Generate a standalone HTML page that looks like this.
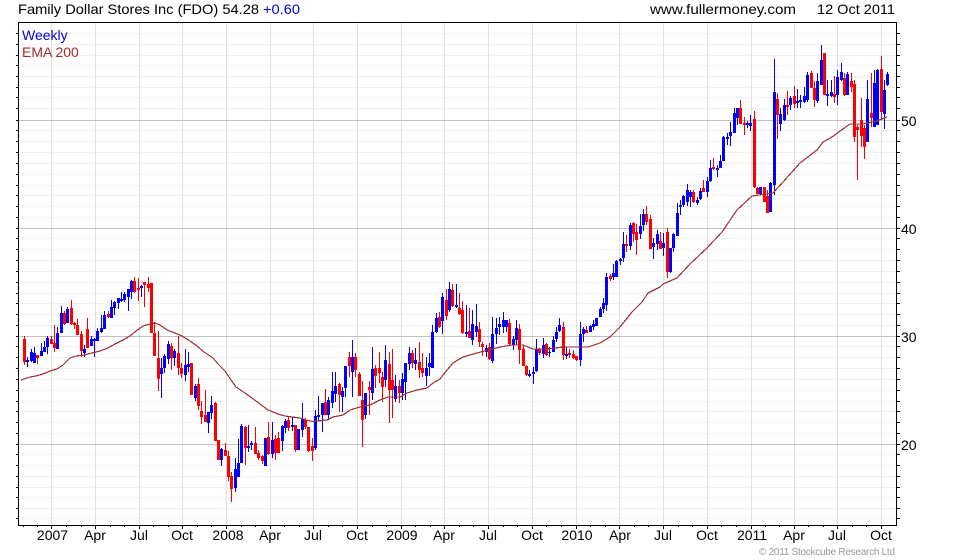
<!DOCTYPE html>
<html><head><meta charset="utf-8"><title>FDO</title>
<style>
html,body{margin:0;padding:0;background:#fff}
body{width:980px;height:560px;overflow:hidden;position:relative}
svg{position:absolute;left:0;top:0}
text{font-family:"Liberation Sans",sans-serif;font-size:14px;fill:#000}
</style></head><body>
<svg width="980" height="560" viewBox="0 0 980 560" xmlns="http://www.w3.org/2000/svg">
<g shape-rendering="crispEdges" fill="none">
<path stroke="#f0f0f0" d="M19 33.5H896M19 44.5H896M19 55.5H896M19 65.5H896M19 76.5H896M19 87.5H896M19 97.5H896M19 108.5H896M19 130.5H896M19 141.5H896M19 152.5H896M19 163.5H896M19 174.5H896M19 185.5H896M19 195.5H896M19 206.5H896M19 217.5H896M19 238.5H896M19 249.5H896M19 260.5H896M19 271.5H896M19 282.5H896M19 293.5H896M19 303.5H896M19 314.5H896M19 325.5H896M19 346.5H896M19 357.5H896M19 368.5H896M19 379.5H896M19 390.5H896M19 401.5H896M19 411.5H896M19 422.5H896M19 433.5H896M19 454.5H896M19 465.5H896M19 476.5H896M19 487.5H896M19 497.5H896M19 508.5H896M19 518.5H896"/>
<path stroke="#e0e0e0" d="M51.5 23V525M95.5 23V525M139.5 23V525M182.5 23V525M226.5 23V525M270.5 23V525M313.5 23V525M357.5 23V525M401.5 23V525M444.5 23V525M488.5 23V525M532.5 23V525M576.5 23V525M619.5 23V525M663.5 23V525M707.5 23V525M751.5 23V525M794.5 23V525M837.5 23V525M881.5 23V525"/>
<path stroke="#c0c0c0" d="M19 120.5H896M19 228.5H896M19 336.5H896M19 444.5H896"/>
<path stroke="#000" d="M18.5 22V526M896.5 22V526M18 22.5H897M18 525.5H897"/>
<path stroke="#000" d="M16 33.5H18M16 44.5H18M16 55.5H18M16 65.5H18M16 76.5H18M16 87.5H18M16 97.5H18M16 108.5H18M16 120.5H18M16 130.5H18M16 141.5H18M16 152.5H18M16 163.5H18M16 174.5H18M16 185.5H18M16 195.5H18M16 206.5H18M16 217.5H18M16 228.5H18M16 238.5H18M16 249.5H18M16 260.5H18M16 271.5H18M16 282.5H18M16 293.5H18M16 303.5H18M16 314.5H18M16 325.5H18M16 336.5H18M16 346.5H18M16 357.5H18M16 368.5H18M16 379.5H18M16 390.5H18M16 401.5H18M16 411.5H18M16 422.5H18M16 433.5H18M16 444.5H18M16 454.5H18M16 465.5H18M16 476.5H18M16 487.5H18M16 497.5H18M16 508.5H18M16 518.5H18"/>
<path stroke="#000" d="M897 33.5H900M897 44.5H900M897 55.5H900M897 65.5H900M897 76.5H900M897 87.5H900M897 97.5H900M897 108.5H900M897 120.5H900M897 130.5H900M897 141.5H900M897 152.5H900M897 163.5H900M897 174.5H900M897 185.5H900M897 195.5H900M897 206.5H900M897 217.5H900M897 228.5H900M897 238.5H900M897 249.5H900M897 260.5H900M897 271.5H900M897 282.5H900M897 293.5H900M897 303.5H900M897 314.5H900M897 325.5H900M897 336.5H900M897 346.5H900M897 357.5H900M897 368.5H900M897 379.5H900M897 390.5H900M897 401.5H900M897 411.5H900M897 422.5H900M897 433.5H900M897 444.5H900M897 454.5H900M897 465.5H900M897 476.5H900M897 487.5H900M897 497.5H900M897 508.5H900M897 518.5H900"/>
<path stroke="#000" d="M51.5 526V529M95.5 526V529M139.5 526V529M182.5 526V529M226.5 526V529M270.5 526V529M313.5 526V529M357.5 526V529M401.5 526V529M444.5 526V529M488.5 526V529M532.5 526V529M576.5 526V529M619.5 526V529M663.5 526V529M707.5 526V529M751.5 526V529M794.5 526V529M837.5 526V529M881.5 526V529M23.5 526V527M37.5 526V527M66.5 526V527M81.5 526V527M110.5 526V527M124.5 526V527M153.5 526V527M168.5 526V527M197.5 526V527M211.5 526V527M241.5 526V527M255.5 526V527M284.5 526V527M299.5 526V527M328.5 526V527M342.5 526V527M372.5 526V527M386.5 526V527M415.5 526V527M430.5 526V527M459.5 526V527M473.5 526V527M503.5 526V527M517.5 526V527M546.5 526V527M561.5 526V527M590.5 526V527M605.5 526V527M634.5 526V527M648.5 526V527M678.5 526V527M692.5 526V527M721.5 526V527M736.5 526V527M765.5 526V527M779.5 526V527M808.5 526V527M823.5 526V527M852.5 526V527M866.5 526V527"/>
</g>
<g shape-rendering="crispEdges" fill="none">
<path stroke="#0000ff" d="M27.5 357V367M31.5 349V362M34.5 347V363M41.5 343V356M44.5 341V352M47.5 336V354M57.5 327V349M61.5 306V333M67.5 307V323M84.5 345V357M91.5 336V346M94.5 338V357M97.5 328V341M101.5 315V333M104.5 311V329M111.5 300V318M114.5 301V315M118.5 298V309M121.5 292V302M124.5 292V302M128.5 289V311M131.5 280V299M141.5 285V297M161.5 358V398M164.5 354V373M168.5 341V364M174.5 349V366M185.5 349V381M188.5 352V372M195.5 384V401M208.5 412V433M211.5 396V419M221.5 448V466M235.5 458V492M238.5 439V477M241.5 424V463M248.5 425V452M251.5 441V450M265.5 438V466M272.5 422V458M282.5 425V451M285.5 419V433M292.5 417V431M298.5 429V450M302.5 403V437M315.5 410V450M318.5 396V421M322.5 403V432M328.5 397V420M332.5 372V408M335.5 372V402M342.5 387V412M345.5 366V397M352.5 340V397M365.5 393V419M372.5 347V400M385.5 345V387M395.5 375V402M402.5 373V400M405.5 363V400M409.5 347V370M415.5 348V370M426.5 357V386M429.5 353V376M432.5 325V368M436.5 313V333M442.5 293V334M449.5 282V312M456.5 284V308M466.5 305V337M472.5 310V345M476.5 304V337M486.5 345V357M492.5 317V363M496.5 318V344M499.5 317V335M503.5 312V333M506.5 320V332M513.5 336V350M516.5 320V345M529.5 370V377M533.5 367V384M536.5 339V372M543.5 338V358M549.5 347V357M553.5 336V352M556.5 327V342M559.5 318V332M566.5 347V359M580.5 322V366M583.5 327V342M590.5 325V332M593.5 320V330M596.5 318V326M600.5 307V317M603.5 298V313M606.5 273V311M613.5 264V280M616.5 260V277M620.5 258V265M623.5 232V262M630.5 223V250M640.5 214V239M643.5 209V231M653.5 238V259M657.5 230V250M663.5 233V256M670.5 248V273M673.5 233V252M677.5 203V236M680.5 200V215M683.5 195V207M687.5 184V206M690.5 190V207M697.5 197V205M700.5 188V200M707.5 177V197M710.5 160V182M717.5 165V177M720.5 155V168M723.5 136V161M727.5 133V145M730.5 122V146M734.5 108V133M737.5 108V125M747.5 121V128M750.5 115V131M760.5 187V194M770.5 182V212M774.5 59V195M780.5 108V131M784.5 99V121M790.5 96V110M797.5 89V108M800.5 95V108M804.5 87V103M807.5 72V102M817.5 73V103M821.5 45V85M827.5 80V106M831.5 80V97M837.5 70V105M841.5 63V81M847.5 72V95M867.5 80V142M874.5 70V127M877.5 69V125M884.5 80V129M887.5 72V86"/>
<path stroke="#0000ff" stroke-width="3" d="M27.5 360V362M31.5 352V361M34.5 353V363M41.5 351V356M44.5 347V352M47.5 338V347M57.5 333V349M61.5 313V333M67.5 309V323M84.5 349V353M91.5 339V346M94.5 339V341M97.5 331V341M101.5 328V332M104.5 315V329M111.5 307V318M114.5 302V308M118.5 298V303M121.5 299V301M124.5 294V300M128.5 289V297M131.5 281V292M141.5 286V288M161.5 368V374M164.5 356V368M168.5 344V359M174.5 351V358M185.5 365V375M188.5 364V367M195.5 386V398M208.5 412V423M211.5 405V413M221.5 449V460M235.5 469V488M238.5 463V477M241.5 426V463M248.5 446V448M251.5 443V445M265.5 438V466M272.5 440V454M282.5 426V441M285.5 421V428M292.5 425V427M298.5 429V450M302.5 419V430M315.5 416V448M318.5 415V417M322.5 403V415M328.5 400V415M332.5 391V403M335.5 386V394M342.5 391V397M345.5 366V388M352.5 357V372M365.5 393V415M372.5 369V393M385.5 360V380M395.5 386V399M402.5 379V393M405.5 363V382M409.5 353V364M415.5 360V364M426.5 368V376M429.5 363V367M432.5 332V368M436.5 318V332M442.5 297V321M449.5 289V310M456.5 305V307M466.5 332V334M472.5 324V340M476.5 326V332M486.5 348V352M492.5 334V361M496.5 328V334M499.5 324V327M503.5 320V327M506.5 320V327M513.5 339V345M516.5 328V340M529.5 374V376M533.5 372V374M536.5 349V371M543.5 345V354M549.5 352V353M553.5 340V352M556.5 332V339M559.5 325V331M566.5 354V356M580.5 334V360M583.5 329V334M590.5 326V332M593.5 324V327M596.5 318V326M600.5 309V317M603.5 303V309M606.5 277V305M613.5 273V277M616.5 261V277M620.5 259V261M623.5 244V258M630.5 225V246M640.5 226V234M643.5 214V225M653.5 243V247M657.5 234V244M663.5 243V248M670.5 248V272M673.5 234V248M677.5 213V236M680.5 205V207M683.5 196V205M687.5 190V202M690.5 192V197M697.5 200V203M700.5 191V199M707.5 181V192M710.5 168V181M717.5 168V170M720.5 161V168M723.5 137V161M727.5 137V139M730.5 132V136M734.5 113V133M737.5 108V118M747.5 123V125M750.5 123V126M760.5 187V194M770.5 183V212M774.5 92V185M780.5 114V124M784.5 105V120M790.5 98V105M797.5 101V103M800.5 100V102M804.5 96V102M807.5 75V100M817.5 81V101M821.5 60V85M827.5 94V96M831.5 92V96M837.5 77V95M841.5 72V80M847.5 74V95M867.5 99V142M874.5 83V127M877.5 70V125M884.5 90V114M887.5 74V85"/>
<path stroke="#ff0000" d="M24.5 336V365M37.5 355V364M51.5 336V344M54.5 325V352M64.5 311V325M71.5 300V325M74.5 322V329M77.5 319V335M81.5 331V357M87.5 318V348M108.5 311V318M134.5 277V293M138.5 278V301M144.5 282V307M148.5 277V292M151.5 283V333M154.5 322V356M158.5 331V391M171.5 343V370M178.5 336V375M181.5 363V378M191.5 363V395M198.5 378V410M201.5 401V424M205.5 390V422M215.5 402V441M218.5 440V460M225.5 443V456M228.5 451V481M231.5 472V502M245.5 426V465M255.5 427V454M258.5 450V460M262.5 455V464M268.5 422V455M275.5 435V460M278.5 432V453M288.5 416V431M295.5 425V452M305.5 418V429M308.5 427V452M312.5 438V461M325.5 389V415M339.5 383V412M349.5 352V377M355.5 353V377M359.5 372V396M362.5 381V447M369.5 381V415M375.5 365V388M379.5 352V383M382.5 372V402M389.5 352V423M392.5 349V418M399.5 380V403M412.5 350V368M419.5 342V378M422.5 353V377M439.5 312V328M446.5 289V320M452.5 284V307M459.5 293V315M462.5 301V334M469.5 308V338M479.5 322V347M482.5 342V356M489.5 343V360M509.5 319V345M519.5 324V364M523.5 345V366M526.5 365V376M539.5 348V355M546.5 343V356M563.5 322V360M569.5 349V358M573.5 350V359M576.5 356V361M586.5 326V333M610.5 274V281M626.5 235V252M633.5 222V242M636.5 224V255M646.5 206V225M650.5 215V249M660.5 232V249M667.5 228V278M693.5 190V203M703.5 180V192M713.5 158V170M740.5 100V124M744.5 117V135M754.5 111V188M757.5 187V194M764.5 187V202M767.5 190V213M777.5 93V139M787.5 91V115M794.5 86V108M811.5 71V88M814.5 81V107M824.5 53V95M834.5 76V103M844.5 73V96M851.5 73V92M854.5 80V142M857.5 125V180M861.5 98V147M864.5 125V159M871.5 73V127M881.5 56V120"/>
<path stroke="#ff0000" stroke-width="3" d="M24.5 339V362M37.5 355V358M51.5 339V344M54.5 343V348M64.5 313V324M71.5 308V324M74.5 323V325M77.5 325V335M81.5 334V351M87.5 329V348M108.5 314V317M134.5 281V292M138.5 288V290M144.5 282V285M148.5 284V288M151.5 283V333M154.5 333V356M158.5 358V379M171.5 346V358M178.5 353V368M181.5 368V374M191.5 363V395M198.5 384V406M201.5 411V417M205.5 415V422M215.5 403V441M218.5 440V460M225.5 450V456M228.5 456V477M231.5 476V489M245.5 427V448M255.5 443V454M258.5 453V458M262.5 456V461M268.5 437V454M275.5 439V453M278.5 438V453M288.5 420V428M295.5 425V450M305.5 420V427M308.5 427V451M312.5 446V451M325.5 402V415M339.5 384V395M349.5 357V366M355.5 357V370M359.5 374V396M362.5 400V420M369.5 387V390M375.5 368V376M379.5 368V373M382.5 377V387M389.5 364V390M392.5 380V390M399.5 386V393M412.5 353V363M419.5 362V370M422.5 368V373M439.5 317V327M446.5 300V316M452.5 290V306M459.5 308V314M462.5 310V333M469.5 331V338M479.5 329V342M482.5 344V347M489.5 347V359M509.5 323V344M519.5 329V350M523.5 349V366M526.5 366V375M539.5 349V353M546.5 344V355M563.5 327V355M569.5 353V355M573.5 354V358M576.5 356V360M586.5 330V333M610.5 276V279M626.5 244V246M633.5 223V234M636.5 232V240M646.5 214V222M650.5 219V249M660.5 241V249M667.5 232V272M693.5 192V202M703.5 188V192M713.5 167V169M740.5 108V124M744.5 123V125M754.5 119V187M757.5 188V194M764.5 187V202M767.5 196V213M777.5 99V115M787.5 105V107M794.5 96V104M811.5 73V88M814.5 88V100M824.5 53V95M834.5 94V97M844.5 78V95M851.5 81V87M854.5 84V137M857.5 127V130M861.5 120V136M864.5 128V147M871.5 113V118M881.5 69V112"/>
</g>
<polyline fill="none" stroke="#a03030" stroke-width="1.2" shape-rendering="crispEdges" points="21,380 30,377 36,376 43,374 50,371 57,369 63,365 70,358 76,356 84,355 92,353 100,351 108,348 115,344 123,340 130,336 136,331 143,326 150,324 155,323 160,325 167,330 175,333 182,336 190,341 197,346 204,352 213,358 218,364 225,371 231,380 236,387 245,393 252,398 260,404 268,410 278,414 285,416 292,417 300,418 306,420 313,421.5 327,420 333,417 343,415 350,410 360,407 370,405 380,400 388,397 400,397 407,393 417,390 427,388 433,383 440,379 443,375 453,363 463,357 477,353 488,350 500,347 512,345 523,345 533,349 547,349 563,347 588,347 600,343 610,337 620,327 632,312 642,302 648,293 660,287 663,284 677,278 690,264 707,248 722,232 737,210 752,196 773,193 783,182 800,163 817,150 823,142 832,137 840,131 850,124 863,124 877,121 887,117"/>
<text x="18" y="14" textLength="241" lengthAdjust="spacingAndGlyphs">Family Dollar Stores Inc (FDO) 54.28</text>
<text x="263" y="14" textLength="37" lengthAdjust="spacingAndGlyphs" style="fill:#0000dd">+0.60</text>
<text x="650" y="14" textLength="146" lengthAdjust="spacingAndGlyphs">www.fullermoney.com</text>
<text x="817" y="14" textLength="78" lengthAdjust="spacingAndGlyphs">12 Oct 2011</text>
<text x="22" y="40" style="fill:#0000dd">Weekly</text>
<text x="22" y="57" style="fill:#a52a2a">EMA 200</text>
<text x="901" y="126">50</text>
<text x="901" y="234">40</text>
<text x="901" y="342">30</text>
<text x="901" y="450">20</text>
<g text-anchor="middle">
<text x="52.5" y="540">2007</text><text x="95" y="540">Apr</text><text x="139" y="540">Jul</text><text x="182" y="540">Oct</text><text x="228" y="540">2008</text><text x="270" y="540">Apr</text><text x="313" y="540">Jul</text><text x="357" y="540">Oct</text><text x="402" y="540">2009</text><text x="444" y="540">Apr</text><text x="488" y="540">Jul</text><text x="532" y="540">Oct</text><text x="577" y="540">2010</text><text x="620" y="540">Apr</text><text x="663" y="540">Jul</text><text x="707" y="540">Oct</text><text x="752" y="540">2011</text><text x="794" y="540">Apr</text><text x="837" y="540">Jul</text><text x="881" y="540">Oct</text>
</g>
<text x="759" y="555" textLength="136" lengthAdjust="spacing" style="font-size:10px;fill:#999">© 2011 Stockcube Research Ltd</text>
</svg>
</body></html>
